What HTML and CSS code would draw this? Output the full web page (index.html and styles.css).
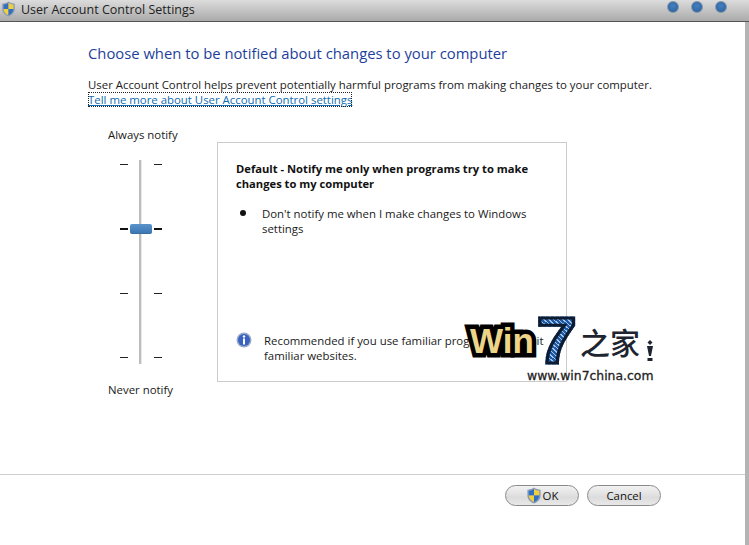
FILE: index.html
```html
<!DOCTYPE html>
<html lang="en">
<head>
  <meta charset="UTF-8">
  <title>User Account Control Settings</title>
  <link rel="stylesheet" href="styles.css">
</head>
<body>
  <div class="window">
    <div class="titlebar">
      <svg class="shield title-shield" viewBox="0 0 16 18">
        <path d="M8 .5 C10 2 12.500 2.800 15 2.800 V9 C15 13 12 16 8 17.500 C4 16 1 13 1 9 V2.800 C3.500 2.800 6 2 8 .5Z" fill="#8a9bb5"/>
        <path d="M8 2 V9 H2.500 V4 C4.500 4 6.500 3.200 8 2Z" fill="#2f6fc4"/>
        <path d="M8 2 C9.500 3.200 11.500 4 13.500 4 V9 H8Z" fill="#f2cf3c"/>
        <path d="M2.500 9 H8 V16 C5 14.800 2.800 12.500 2.500 9Z" fill="#f2cf3c"/>
        <path d="M8 9 H13.500 C13.200 12.500 11 14.800 8 16Z" fill="#2f6fc4"/>
      </svg>
      <span class="title">User Account Control Settings</span>
      <div class="win-buttons">
        <span class="dot"></span>
        <span class="dot"></span>
        <span class="dot"></span>
      </div>
    </div>

    <div class="content">
      <div class="main">
        <h1>Choose when to be notified about changes to your computer</h1>
        <p class="intro">User Account Control helps prevent potentially harmful programs from making changes to your computer.</p>
        <a href="#" class="more">Tell me more about User Account Control settings</a>

        <div class="settings">
          <div class="slider-col">
            <div class="slider-label">Always notify</div>
            <div class="slider">
              <div class="track"></div>
              <div class="thumb"></div>
              <div class="tick-row"><i></i><i></i></div>
              <div class="tick-row active"><i></i><i></i></div>
              <div class="tick-row"><i></i><i></i></div>
              <div class="tick-row"><i></i><i></i></div>
            </div>
            <div class="slider-label bottom">Never notify</div>
          </div>

          <div class="panel">
            <div class="panel-title">Default - Notify me only when programs try to make changes to my computer</div>
            <ul>
              <li><span>Don't notify me when I make changes to Windows settings</span></li>
            </ul>
            <div class="note">
              <svg class="info" viewBox="0 0 16 16">
                <circle cx="8" cy="8" r="7.500" fill="#9aa9c8"/>
                <circle cx="8" cy="8" r="6" fill="#3a62c0"/>
                <circle cx="8" cy="4.500" r="1.200" fill="#fff"/>
                <rect x="7" y="6.500" width="2" height="6" fill="#fff"/>
              </svg>
              <span>Recommended if you use familiar programs and visit familiar websites.</span>
            </div>
          </div>
        </div>
      </div>

      <div class="footer">
        <button type="button" class="ok">
          <svg class="shield" viewBox="0 0 16 18">
            <path d="M8 .5 C10 2 12.500 2.800 15 2.800 V9 C15 13 12 16 8 17.500 C4 16 1 13 1 9 V2.800 C3.500 2.800 6 2 8 .5Z" fill="#8a9bb5"/>
            <path d="M8 2 V9 H2.500 V4 C4.500 4 6.500 3.200 8 2Z" fill="#2f6fc4"/>
            <path d="M8 2 C9.500 3.200 11.500 4 13.500 4 V9 H8Z" fill="#f2cf3c"/>
            <path d="M2.500 9 H8 V16 C5 14.800 2.800 12.500 2.500 9Z" fill="#f2cf3c"/>
            <path d="M8 9 H13.500 C13.200 12.500 11 14.800 8 16Z" fill="#2f6fc4"/>
          </svg>OK</button>
        <button type="button">Cancel</button>
      </div>
    </div>
  </div>

  <!-- watermark -->
  <div class="watermark">
    <span class="wm-win">Win</span>
    <span class="wm-seven">7</span>
    <span class="wm-cn">之家</span>
    <svg class="wm-mark" viewBox="0 0 8 22">
      <path d="M4 0 L6.500 2.500 L4 5 L1.500 2.500Z" fill="#1e2530"/>
      <path d="M1 6 H7 L5 16 H3Z" fill="#1e2530"/>
      <rect x="1.500" y="18" width="5" height="3" fill="#1e2530"/>
    </svg>
    <span class="wm-url">www.win7china.com</span>
  </div>
</body>
</html>
```

FILE: styles.css
```css
* { box-sizing: border-box; }
html, body {
  margin: 0;
  height: 100%;
}
body {
  font-family: 'Open Sans', 'Noto Sans CJK SC', sans-serif;
  font-size: 11.4px;
  line-height: 15px;
  color: #1a1a1a;
  background: #b4b4b4;
  overflow: hidden;
}
.window {
  display: flex;
  flex-direction: column;
  height: 545px;
}
.titlebar {
  display: flex;
  align-items: center;
  height: 22px;
  flex-shrink: 0;
  padding-left: 1px;
  background: linear-gradient(#dcdcdc, #aaaaaa);
  border-bottom: 1px solid #555;
}
.title-shield {
  width: 15px;
  height: 16px;
  margin-top: -4px;
}
.title {
  margin-left: 5px;
  margin-top: -3px;
  font-size: 12.5px;
  color: #222;
}
.win-buttons {
  display: flex;
  gap: 12px;
  margin-left: auto;
  margin-right: 22px;
  margin-top: -8px;
}
.dot {
  width: 12px;
  height: 12px;
  border-radius: 50%;
  background: radial-gradient(circle at 50% 40%, #437fc0, #2c5f98);
  border: 1px solid #8296aa;
}
.content {
  flex: 1;
  display: flex;
  flex-direction: column;
  margin-right: 4px;
  background: #fff;
}
.main {
  flex: 1;
  padding: 21px 0 0 88px;
}
h1 {
  margin: 0;
  font-size: 14.8px;
  line-height: 20px;
  font-weight: 400;
  color: #1d3f9b;
}
.intro {
  margin: 14px 0 0;
  white-space: nowrap;
}
.more {
  display: inline-block;
  color: #0f6cb0;
  outline: 1px dotted #222;
  outline-offset: -1px;
}
.settings {
  display: flex;
  margin-top: 35px;
}
.slider-col {
  width: 129px;
  flex-shrink: 0;
  padding-left: 20px;
  margin-top: -15px;
}
.slider-col .slider-label {
  white-space: nowrap;
}
.slider-label.bottom {
  margin-top: 24px;
}
.slider {
  position: relative;
  display: flex;
  flex-direction: column;
  justify-content: space-between;
  width: 42px;
  height: 194px;
  margin: 22px 0 0 12px;
}
.track {
  position: absolute;
  left: 19px;
  top: -4px;
  bottom: -6px;
  width: 3px;
  background: #bdbdbd;
  border-right: 1px solid #e8e8e8;
}
.thumb {
  position: absolute;
  left: 10px;
  top: 60px;
  width: 22px;
  height: 10px;
  border-radius: 2px;
  background: linear-gradient(#5b93cb, #3c78b4);
  border-bottom: 1px solid #3a6c9e;
}
.tick-row {
  display: flex;
  justify-content: space-between;
  height: 1px;
}
.tick-row i {
  width: 8px;
  height: 1px;
  background: #222;
}
.tick-row.active,
.tick-row.active i {
  height: 2px;
}
.tick-row.active i {
  background: #111;
}
.panel {
  display: flex;
  flex-direction: column;
  width: 350px;
  height: 240px;
  padding: 18px 18px 18px 18px;
  border: 1px solid #cbcbcb;
}
.panel-title {
  font-size: 11.2px;
  font-weight: 700;
  line-height: 15px;
  color: #111;
}
ul {
  margin: 15px 0 0;
  padding: 0 0 0 4px;
  list-style: none;
}
li {
  display: flex;
  padding-right: 20px;
}
li::before {
  content: "";
  flex-shrink: 0;
  width: 6px;
  height: 6px;
  margin: 4px 16px 0 0;
  border-radius: 50%;
  background: #111;
}
.note {
  display: flex;
  margin-top: auto;
}
.info {
  width: 16px;
  height: 16px;
  flex-shrink: 0;
  margin-right: 12px;
  margin-top: -1px;
}
.footer {
  display: flex;
  justify-content: flex-end;
  gap: 8px;
  height: 71px;
  padding: 10px 84px 0 0;
  border-top: 1px solid #cfcfcf;
}
button {
  display: flex;
  align-items: center;
  justify-content: center;
  width: 74px;
  height: 21px;
  padding: 0;
  font: inherit;
  color: #111;
  background: linear-gradient(#f2f2f2, #dcdcdc 60%, #e8e8e8);
  border: 1px solid #8a8a8a;
  border-radius: 11px;
}
button .shield {
  width: 16px;
  height: 17px;
  margin-right: 1px;
}
.watermark {
  position: absolute;
  left: 462px;
  top: 314px;
  width: 195px;
  height: 72px;
}
.wm-win {
  position: absolute;
  left: 8px;
  top: 5px;
  font: 700 35px/44px 'Liberation Sans', sans-serif;
  color: #ecd488;
  -webkit-text-stroke: 9px #000;
  paint-order: stroke fill;
}
.wm-seven {
  position: absolute;
  left: 77px;
  top: -1px;
  font: 700 64px/56px 'Liberation Sans', sans-serif;
  color: transparent;
  background: repeating-linear-gradient(45deg, #a5c3e8 0 1px, #1f5aa5 1px 3px);
  -webkit-background-clip: text;
  background-clip: text;
  -webkit-text-stroke: 3px #0d1c33;
  paint-order: stroke fill;
  transform: scaleX(1.12);
}
.wm-cn {
  position: absolute;
  left: 118px;
  top: 11px;
  font: 500 30px/32px 'Noto Sans CJK SC', sans-serif;
  color: #1e2530;
}
.wm-mark {
  position: absolute;
  left: 184px;
  top: 26px;
  width: 8px;
  height: 22px;
}
.wm-url {
  position: absolute;
  left: 65px;
  top: 54px;
  font: 400 12.4px/16px 'DejaVu Sans', sans-serif;
  -webkit-text-stroke: .3px #222;
  color: #222;
}
```
